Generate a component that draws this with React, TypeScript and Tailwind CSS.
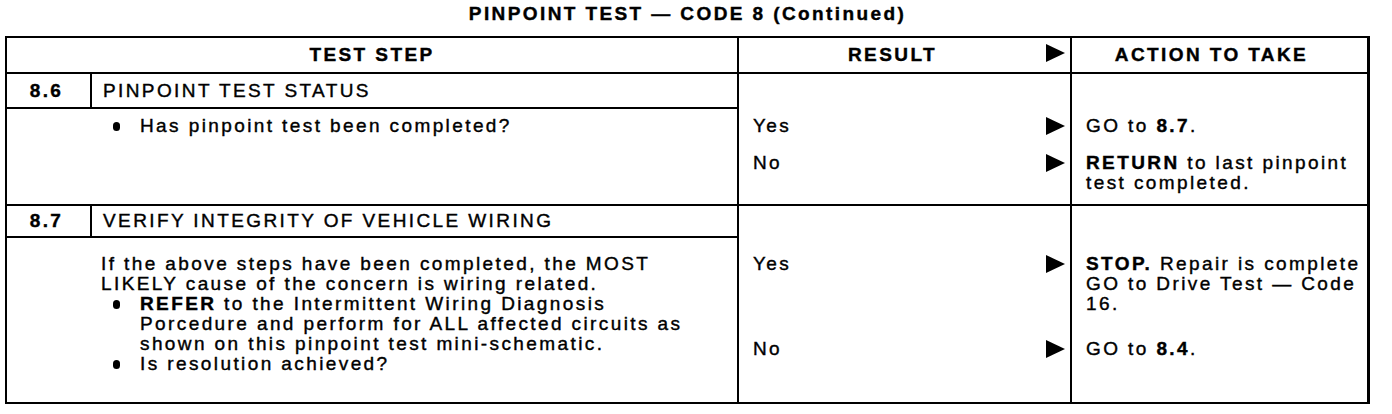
import React from "react";

function Arrow({ className = "" }: { className?: string }) {
  return (
    <svg width="19" height="18" viewBox="0 0 19 18" className={className}>
      <polygon points="0,0 19,9 0,18" fill="black" />
    </svg>
  );
}

function Bullet({ children }: { children: React.ReactNode }) {
  return (
    <div className="flex">
      <div className="w-[39px] shrink-0 pl-[12px] pt-[6px]">
        <div className="w-[7px] h-[9px] rounded-full bg-black" />
      </div>
      <div className="whitespace-nowrap">{children}</div>
    </div>
  );
}

function ResultRow({ label, h = "" }: { label: string; h?: string }) {
  return (
    <div className={`flex justify-between items-start pl-[14px] pr-[5px] ${h}`}>
      <span>{label}</span>
      <Arrow className="mt-[1px]" />
    </div>
  );
}

export default function App() {
  return (
    <div className="min-h-screen bg-white text-black font-['Liberation_Sans',Arial,sans-serif] text-[19px] tracking-[2.4px] [-webkit-text-stroke:0.4px_black]">
      <div className="h-[36px] pt-[4px] leading-[20px] w-[1365px] ml-[5px] text-center font-bold">
        PINPOINT TEST — CODE 8 (Continued)
      </div>
      <div className="ml-[5px] w-[1365px] border-2 border-r-[3px] border-black leading-[20px]">
        {/* header */}
        <div className="flex h-[36px] border-b-2 border-black font-bold">
          <div className="w-[730px] flex items-center justify-center">TEST STEP</div>
          <div className="w-[333px] border-l-2 border-black flex items-center pr-[5px]">
            <div className="flex-1 text-center">RESULT</div>
            <Arrow className="-mt-[4px]" />
          </div>
          <div className="w-[297px] border-l-2 border-black flex items-center justify-center pr-[16px]">
            ACTION TO TAKE
          </div>
        </div>

        {/* step 8.6 */}
        <div className="flex h-[132px] border-b-2 border-black">
          <div className="w-[730px] flex flex-col">
            <div className="flex h-[35px] border-b-2 border-black">
              <div className="w-[83px] flex items-center justify-center pr-[4px] font-bold">8.6</div>
              <div className="flex-1 border-l-2 border-black flex items-center pl-[11px]">
                PINPOINT TEST STATUS
              </div>
            </div>
            <div className="pl-[94px] pt-[7px]">
              <Bullet>Has pinpoint test been completed?</Bullet>
            </div>
          </div>
          <div className="w-[333px] border-l-2 border-black pt-[42px]">
            <ResultRow label="Yes" h="h-[37px]" />
            <ResultRow label="No" />
          </div>
          <div className="w-[297px] border-l-2 border-black pt-[42px] pl-[14px] whitespace-nowrap">
            <div className="h-[37px]">
              GO to <b>8.7</b>.
            </div>
            <div>
              <b>RETURN</b> to last pinpoint
              <br />
              test completed.
            </div>
          </div>
        </div>

        {/* step 8.7 */}
        <div className="flex h-[196px]">
          <div className="w-[730px] flex flex-col">
            <div className="flex h-[32px] border-b-2 border-black">
              <div className="w-[83px] flex items-center justify-center pr-[4px] font-bold">8.7</div>
              <div className="flex-1 border-l-2 border-black flex items-center pl-[11px]">
                VERIFY INTEGRITY OF VEHICLE WIRING
              </div>
            </div>
            <div className="pl-[94px] pt-[16px]">
              <div className="whitespace-nowrap">
                If the above steps have been completed, the MOST
                <br />
                LIKELY cause of the concern is wiring related.
              </div>
              <Bullet>
                <b>REFER</b> to the Intermittent Wiring Diagnosis
                <br />
                Porcedure and perform for ALL affected circuits as
                <br />
                shown on this pinpoint test mini-schematic.
              </Bullet>
              <Bullet>Is resolution achieved?</Bullet>
            </div>
          </div>
          <div className="w-[333px] border-l-2 border-black pt-[48px]">
            <ResultRow label="Yes" h="h-[85px]" />
            <ResultRow label="No" />
          </div>
          <div className="w-[297px] border-l-2 border-black pt-[48px] pl-[14px] whitespace-nowrap">
            <div className="h-[85px]">
              <b>STOP.</b> Repair is complete
              <br />
              GO to Drive Test — Code
              <br />
              16.
            </div>
            <div>
              GO to <b>8.4</b>.
            </div>
          </div>
        </div>
      </div>
    </div>
  );
}
